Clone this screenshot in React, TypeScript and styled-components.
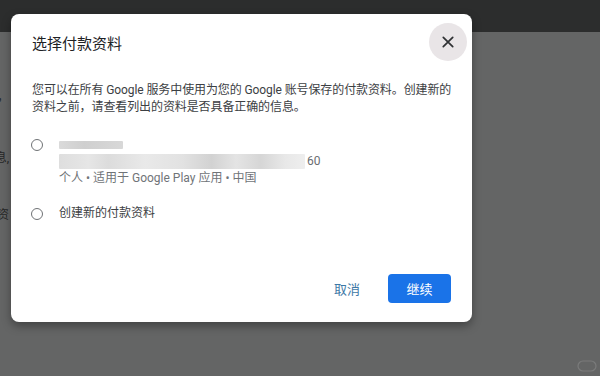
import React from "react";
import styled, { createGlobalStyle } from "styled-components";

const GlobalStyle = createGlobalStyle`
  html, body {
    margin: 0;
    padding: 0;
  }
  body {
    width: 600px;
    height: 376px;
    overflow: hidden;
    font-family: Roboto, "Noto Sans CJK SC", "Noto Sans", sans-serif;
  }
`;

const Page = styled.div({
    position: "relative",
    width: "600px",
    height: "376px",
    display: "flex",
    flexDirection: "column",
    backgroundColor: "#646565",
    overflow: "hidden",
});

const TopBar = styled.div({
    height: "32px",
    backgroundColor: "#2c2d2d",
    flexShrink: 0,
});

// the page behind the dimmed overlay, only its right-hand edge peeks out
const PageBody = styled.div({
    width: "9px",
    overflow: "hidden",
    display: "flex",
    flexDirection: "column",
    paddingTop: "58px",
});

const PeekLine = styled.div<{ $gap: number }>`
  display: flex;
  justify-content: flex-end;
  white-space: nowrap;
  font-size: 12px;
  line-height: 14px;
  color: #262727;
  margin-bottom: ${(p) => p.$gap}px;
`;

const Dialog = styled.div({
    position: "absolute",
    left: "11px",
    top: "14px",
    width: "461px",
    height: "308px",
    boxSizing: "border-box",
    backgroundColor: "#ffffff",
    borderRadius: "8px",
    boxShadow: "0 4px 10px rgba(0,0,0,0.35)",
    display: "flex",
    flexDirection: "column",
    padding: "0 21px 19px 21px",
});

const Header = styled.div({
    display: "flex",
    alignItems: "center",
    justifyContent: "space-between",
    paddingTop: "9px",
    marginRight: "-16px",
});

const Title = styled.h2({
    margin: 0,
    fontSize: "15px",
    fontWeight: 400,
    color: "#202124",
});

const CloseButton = styled.button({
    width: "38px",
    height: "38px",
    borderRadius: "50%",
    border: "none",
    backgroundColor: "#e9e5e7",
    display: "flex",
    alignItems: "center",
    justifyContent: "center",
    padding: 0,
    cursor: "pointer",
});

const Intro = styled.p({
    margin: "21px 0 0 0",
    fontSize: "12px",
    lineHeight: "17px",
    color: "#3c4043",
    whiteSpace: "nowrap",
    letterSpacing: "-0.1px",
});

const Options = styled.div({
    display: "flex",
    flexDirection: "column",
    gap: "18px",
    marginTop: "20px",
});

const Option = styled.label({
    display: "flex",
    alignItems: "flex-start",
    gap: "16px",
    cursor: "pointer",
});

const Radio = styled.span({
    width: "12px",
    height: "12px",
    borderRadius: "50%",
    border: "1.5px solid #6f7275",
    boxSizing: "border-box",
    flexShrink: 0,
    marginTop: "2.5px",
    marginLeft: "-1px",
});

const OptionText = styled.div({
    display: "flex",
    flexDirection: "column",
    fontSize: "12px",
    lineHeight: "17px",
    color: "#3c4043",
});

const Redacted = styled.div<{ $width: number; $height: number }>`
  width: ${(p) => p.$width}px;
  height: ${(p) => p.$height}px;
  border-radius: 1px;
`;

const RedactedRow = styled.div({
    display: "flex",
    alignItems: "center",
    height: "17px",
});

const RedactedTail = styled.span({
    color: "#6a6d70",
    fontSize: "12px",
    marginLeft: "2px",
});

const Muted = styled.span({
    color: "#707478",
});

const Footer = styled.div({
    marginTop: "auto",
    display: "flex",
    justifyContent: "flex-end",
    alignItems: "center",
    gap: "12px",
});

const TextButton = styled.button({
    border: "none",
    background: "none",
    color: "#3d78a6",
    fontSize: "13px",
    fontFamily: "inherit",
    padding: "0 16px",
    height: "29px",
    cursor: "pointer",
});

const PrimaryButton = styled.button({
    border: "none",
    backgroundColor: "#1a73e8",
    color: "#ffffff",
    fontSize: "13px",
    fontFamily: "inherit",
    width: "63px",
    height: "29px",
    borderRadius: "4px",
    cursor: "pointer",
});

const Watermark = styled.svg({
    position: "absolute",
    right: "3px",
    bottom: "4px",
});

export default function App() {
    return (
        <>
            <GlobalStyle />
            <Page>
                <TopBar />
                <PageBody>
                    <PeekLine $gap={47}>，</PeekLine>
                    <PeekLine $gap={43}>正确的信息,</PeekLine>
                    <PeekLine $gap={0}>创建新的付款资</PeekLine>
                </PageBody>

                <Dialog>
                    <Header>
                        <Title>选择付款资料</Title>
                        <CloseButton aria-label="关闭">
                            <svg width="12" height="12" viewBox="0 0 14 14">
                                <path d="M1.5 1.5 L12.5 12.5 M12.5 1.5 L1.5 12.5" stroke="#2f3133" strokeWidth="2" strokeLinecap="round" />
                            </svg>
                        </CloseButton>
                    </Header>

                    <Intro>
                        您可以在所有 Google 服务中使用为您的 Google 账号保存的付款资料。创建新的
                        <br />
                        资料之前，请查看列出的资料是否具备正确的信息。
                    </Intro>

                    <Options>
                        <Option>
                            <Radio />
                            <OptionText>
                                <RedactedRow>
                                    <Redacted $width={64} $height={8} style={{ background: "linear-gradient(90deg,#dadada,#cfcfcf 40%,#d8d8d8)" }} />
                                </RedactedRow>
                                <RedactedRow>
                                    <Redacted
                                        $width={246}
                                        $height={15}
                                        style={{
                                            background:
                                                "linear-gradient(90deg,#dedede 0%,#e6e6e6 12%,#dcdcdc 20%,#e9e9e9 35%,#e2e2e2 50%,#d2d2d2 62%,#e4e4e4 72%,#d6d6d6 82%,#e8e8e8 92%,#eeeeee 100%)",
                                        }}
                                    />
                                    <RedactedTail>60</RedactedTail>
                                </RedactedRow>
                                <Muted>个人 • 适用于 Google Play 应用 • 中国</Muted>
                            </OptionText>
                        </Option>
                        <Option>
                            <Radio />
                            <OptionText>创建新的付款资料</OptionText>
                        </Option>
                    </Options>

                    <Footer>
                        <TextButton>取消</TextButton>
                        <PrimaryButton>继续</PrimaryButton>
                    </Footer>
                </Dialog>

                <Watermark width="20" height="12" viewBox="0 0 20 12">
                    <rect x="1" y="1" width="18" height="10" rx="5" fill="none" stroke="#7a7b7b" strokeWidth="1.2" />
                </Watermark>
            </Page>
        </>
    );
}
